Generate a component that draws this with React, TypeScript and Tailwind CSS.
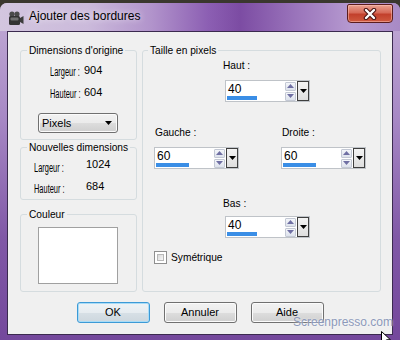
import React from 'react'

function SpinArrow({ up }: { up?: boolean }) {
  return (
    <div className="flex h-[9px] w-[11px] items-center justify-center rounded-[1px] border border-[#c3c8d4] bg-[linear-gradient(180deg,#f4f6fa_0%,#dde2ec_100%)]">
      <svg width="7" height="4" viewBox="0 0 7 4">
        <path d={up ? 'M0 4 L3.5 0 L7 4 Z' : 'M0 0 L3.5 4 L7 0 Z'} fill="#6f6fa3" />
      </svg>
    </div>
  )
}

function Spinner({ value, barClass }: { value: string; barClass: string }) {
  return (
    <div className="flex h-[22px] w-[85px] border border-[#bfc3c8] bg-white">
      <div className="flex w-[59px] flex-col">
        <span className="pl-[2px] pt-[1px] text-[12px] leading-[14px] text-black">{value}</span>
        <div className={'mt-auto mb-[1px] ml-[1px] h-[4px] shrink-0 bg-[#3a8ee6] ' + barClass} />
      </div>
      <div className="ml-[1px] flex flex-col justify-center gap-[1px]">
        <SpinArrow up />
        <SpinArrow />
      </div>
      <div className="ml-[1px] flex h-[20px] w-[12px] items-center justify-center border border-[#3f3f3f] bg-[linear-gradient(180deg,#f3f3f3_0%,#dedede_100%)]">
        <svg width="7" height="4" viewBox="0 0 7 4">
          <path d="M0 0 L3.5 4 L7 0 Z" fill="#000" />
        </svg>
      </div>
    </div>
  )
}

function Button({ label, focused }: { label: string; focused?: boolean }) {
  return (
    <div
      className={
        'flex h-[21px] w-[73px] items-center justify-center rounded-[3px] border text-[11px] leading-[13px] text-black ' +
        (focused
          ? 'border-[#3c9ad6] bg-[linear-gradient(180deg,#eef3f6_0%,#e6ecf0_50%,#d7e0e6_51%,#cdd7de_100%)] shadow-[inset_0_0_0_1px_#a9dcf7]'
          : 'border-[#707070] bg-[linear-gradient(180deg,#f2f2f2_0%,#ebebeb_50%,#dddddd_51%,#cfcfcf_100%)] shadow-[inset_0_0_0_1px_#fbfbfb]')
      }
    >
      {label}
    </div>
  )
}

// the width/height labels on the left use a tall, narrow face
function DimLabel({ text, width }: { text: string; width: string }) {
  return (
    <span className={'block shrink-0 ' + width}>
      <span className="inline-block origin-left scale-x-[0.62] whitespace-nowrap text-[12px] leading-[13px]">{text}</span>
    </span>
  )
}

export default function App() {
  const groupBox = 'rounded-[3px] border border-[#d5dcdf]'
  const legend = 'ml-[6px] whitespace-nowrap px-[2px] text-[10.2px] leading-[13px]'

  return (
    <div className="relative h-[340px] w-[400px] overflow-hidden bg-[#3a372e] font-['Liberation_Sans',Arial,sans-serif] text-black">
      <div className="h-[3px]" />
      <div className="flex h-[337px] flex-col rounded-t-[7px] bg-[linear-gradient(180deg,#c2acd6_0%,#a687c4_35%,#8058a6_70%,#74489c_100%)] pb-[5px]">
        {/* title bar */}
        <div className="flex h-[28px] items-start rounded-t-[7px] bg-[linear-gradient(90deg,#d3c6df_0%,#cbbadb_22%,#b193cb_38%,#8c5fb3_52%,#7c4ca3_60%,#9a74bb_74%,#b69ad0_88%,#a88ac5_100%)]">
          <svg className="ml-[8px] mt-[7px]" width="16" height="16" viewBox="0 0 16 16">
            <circle cx="4" cy="4" r="2.6" fill="#4a4a4a" />
            <circle cx="9" cy="4" r="2.6" fill="#4a4a4a" />
            <rect x="1" y="6" width="11" height="9" rx="1.5" fill="#333" />
            <rect x="2.5" y="7.5" width="8" height="3" rx="1" fill="#9a9a9a" opacity="0.6" />
            <path d="M12 8 L15.5 6 V14 L12 12 Z" fill="#3c3c3c" />
          </svg>
          <span className="ml-[5px] mt-[6px] text-[12px] leading-[15px] [text-shadow:0_0_6px_rgba(255,255,255,0.9)]">
            Ajouter des bordures
          </span>
          <div className="ml-auto mr-[7px] mt-[1px] flex h-[19px] w-[46px] items-center justify-center rounded-b-[4px] rounded-t-[2px] border border-[#5b1d1d] bg-[linear-gradient(180deg,#eaa191_0%,#d66a58_45%,#c2402c_55%,#cf5a3f_100%)] shadow-[inset_0_0_0_1px_rgba(255,200,190,0.5)]">
            <svg width="14" height="12" viewBox="0 0 14 12">
              <path d="M3 2 L11 10 M11 2 L3 10" stroke="#4a1414" strokeWidth="4.5" strokeLinecap="round" />
              <path d="M3 2 L11 10 M11 2 L3 10" stroke="#fff" strokeWidth="2.4" strokeLinecap="round" />
            </svg>
          </div>
        </div>

        {/* client area */}
        <div className="mx-[7px] flex flex-1 flex-col border border-[#3b2a4f] bg-[#f0f0f0]">
          <div className="flex gap-[5px] pl-[12px] pt-[12px]">
            {/* left column */}
            <div className="flex w-[117px] flex-col">
              <fieldset className={groupBox + ' h-[96px]'}>
                <legend className={legend}>Dimensions d'origine</legend>
                <div className="mt-[7px] flex flex-col gap-[7px] pl-[29px] leading-[13px]">
                  <div className="flex">
                    <DimLabel text="Largeur :" width="w-[34px]" />
                    <span className="text-[11px]">904</span>
                  </div>
                  <div className="flex">
                    <DimLabel text="Hauteur :" width="w-[34px]" />
                    <span className="text-[11px]">604</span>
                  </div>
                </div>
                <div className="ml-[17px] mt-[12px] flex h-[20px] w-[80px] items-center justify-between rounded-[3px] border border-[#707070] bg-[linear-gradient(180deg,#f2f2f2_0%,#ebebeb_50%,#dddddd_51%,#cfcfcf_100%)] pl-[3px] pr-[5px] text-[11px] leading-[13px] shadow-[inset_0_0_0_1px_#fbfbfb]">
                  <span>Pixels</span>
                  <svg width="7" height="4" viewBox="0 0 7 4">
                    <path d="M0 0 L3.5 4 L7 0 Z" fill="#000" />
                  </svg>
                </div>
              </fieldset>

              <fieldset className={groupBox + ' mt-[1px] h-[59px]'}>
                <legend className={legend}>Nouvelles dimensions</legend>
                <div className="mt-[6px] flex flex-col gap-[6px] pl-[13px] leading-[13px]">
                  <div className="flex">
                    <DimLabel text="Largeur :" width="w-[52px]" />
                    <span className="-mt-[2px] text-[11px]">1024</span>
                  </div>
                  <div className="flex">
                    <DimLabel text="Hauteur :" width="w-[52px]" />
                    <span className="-mt-[1px] text-[11px]">684</span>
                  </div>
                </div>
              </fieldset>

              <fieldset className={groupBox + ' mt-[8px] h-[84px]'}>
                <legend className={legend}>Couleur</legend>
                <div className="ml-[17px] mt-[6px] h-[57px] w-[80px] border border-[#a0a0a0] bg-white" />
              </fieldset>
            </div>

            {/* right group */}
            <fieldset className={groupBox + ' h-[248px] w-[239px]'}>
              <legend className="ml-[5px] whitespace-nowrap px-[2px] text-[10.2px] leading-[13px]">Taille en pixels</legend>
              <div className="flex flex-col text-[10.2px] leading-[13px]">
                <span className="mt-[2px] pl-[80px]">Haut :</span>
                <div className="mt-[8px] pl-[82px]">
                  <Spinner value="40" barClass="w-[30px]" />
                </div>

                <div className="mt-[24px] grid grid-cols-[127px_1fr] pl-[11px]">
                  <span className="pl-[1px]">Gauche :</span>
                  <span className="pl-[1px]">Droite :</span>
                  <div className="mt-[8px]">
                    <Spinner value="60" barClass="w-[33px]" />
                  </div>
                  <div className="mt-[8px]">
                    <Spinner value="60" barClass="w-[33px]" />
                  </div>
                </div>

                <span className="mt-[28px] pl-[80px]">Bas :</span>
                <div className="mt-[6px] pl-[82px]">
                  <Spinner value="40" barClass="w-[30px]" />
                </div>

                <div className="mt-[13px] flex items-center gap-[4px] pl-[11px]">
                  <div className="h-[13px] w-[13px] border border-[#8f8f8f] bg-white p-[2px]">
                    <div className="h-full w-full border border-[#b8b8b8] bg-[linear-gradient(135deg,#d9d9d9_0%,#f7f7f7_100%)]" />
                  </div>
                  <span>Symétrique</span>
                </div>
              </div>
            </fieldset>
          </div>

          {/* buttons */}
          <div className="mt-[10px] flex justify-center gap-[14px]">
            <Button label="OK" focused />
            <Button label="Annuler" />
            <Button label="Aide" />
          </div>
        </div>
      </div>

      {/* watermark */}
      <span className="absolute left-[293px] top-[315px] text-[12px] leading-[14px] text-[#8c99ba] [text-shadow:0_0_2px_rgba(255,255,255,0.8)]">
        Screenpresso.com
      </span>

      {/* mouse cursor */}
      <svg className="absolute left-[381px] top-[331px]" width="12" height="16" viewBox="0 0 12 16">
        <path d="M0.5 0.5 L0.5 12.5 L3.5 9.5 L5.5 14 L7.5 13 L5.5 8.8 L9.5 8.8 Z" fill="#fff" stroke="#000" strokeWidth="1" />
      </svg>
    </div>
  )
}
